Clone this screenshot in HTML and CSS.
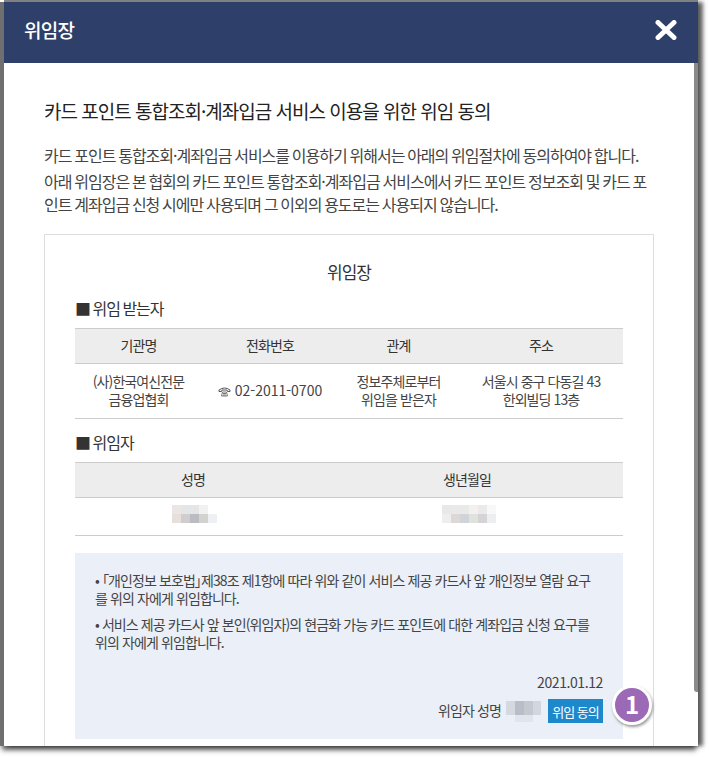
FILE: index.html
```html
<!DOCTYPE html>
<html lang="ko">
<head>
    <meta charset="UTF-8">
    <meta name="viewport" content="width=device-width, initial-scale=1.0">
    <title>위임장</title>
    <link rel="stylesheet" href="styles.css">
</head>
<body>

    <div class="window">
        <div class="window-head">
            <h1>위임장</h1>
            <svg class="close-icon" viewBox="0 0 22 20" width="22" height="20">
                <path d="M3 2.5 L19 17.5 M19 2.5 L3 17.5" stroke="#fff" stroke-width="5" stroke-linecap="round"/>
            </svg>
        </div>

        <div class="window-body">
            <h2>카드 포인트 통합조회·계좌입금 서비스 이용을 위한 위임 동의</h2>
            <p class="intro">카드 포인트 통합조회·계좌입금 서비스를 이용하기 위해서는 아래의 위임절차에 동의하여야 합니다.</p>
            <p class="intro">아래 위임장은 본 협회의 카드 포인트 통합조회·계좌입금 서비스에서 카드 포인트 정보조회 및 카드 포<br>인트 계좌입금 신청 시에만 사용되며 그 이외의 용도로는 사용되지 않습니다.</p>

            <div class="paper">
                <h3>위임장</h3>

                <h4>■ 위임 받는자</h4>
                <table class="info-table receiver">
                    <tr>
                        <th>기관명</th>
                        <th>전화번호</th>
                        <th>관계</th>
                        <th>주소</th>
                    </tr>
                    <tr>
                        <td>(사)한국여신전문<br>금융업협회</td>
                        <td class="tel"><svg class="phone-icon" viewBox="0 0 13 11" width="13" height="11">
                            <path d="M1 4 Q6.5 0 12 4 L12 5.5 L9.5 5.5 L9 4 L4 4 L3.5 5.5 L1 5.5 Z" fill="none" stroke="#555"/>
                            <path d="M3.5 10 L4.5 6 L8.5 6 L9.5 10 Z M5 7.5 H8 M5 9 H8" fill="none" stroke="#555" stroke-width="0.8"/>
                        </svg> 02-2011-0700</td>
                        <td>정보주체로부터<br>위임을 받은자</td>
                        <td>서울시 중구 다동길 43<br>한외빌딩 13층</td>
                    </tr>
                </table>

                <h4 class="second">■ 위임자</h4>
                <table class="info-table giver">
                    <tr>
                        <th>성명</th>
                        <th>생년월일</th>
                    </tr>
                    <tr>
                        <td><span class="mosaic mosaic-name"></span></td>
                        <td><span class="mosaic mosaic-birth"></span></td>
                    </tr>
                </table>

                <div class="notice">
                    <p>• <span class="bracket">「</span>개인정보 보호법<span class="bracket">」</span>제38조 제1항에 따라 위와 같이 서비스 제공 카드사 앞 개인정보 열람 요구<br>를 위의 자에게 위임합니다.</p>
                    <p>• 서비스 제공 카드사 앞 본인(위임자)의 현금화 가능 카드 포인트에 대한 계좌입금 신청 요구를<br>위의 자에게 위임합니다.</p>
                    <div class="date">2021.01.12</div>
                    <div class="sign">
                        <span class="sign-name">위임자 성명</span>
                        <span class="mosaic mosaic-sign"></span>
                        <button class="agree-btn">위임 동의</button>
                        <span class="step-badge">1</span>
                    </div>
                </div>
            </div>
        </div>

        <div class="scroll-thumb"></div>
    </div>

</body>
</html>
```

FILE: styles.css
```css
* {
    box-sizing: border-box;
}
html, body {
    height: 100%;
}
body {
    margin: 0;
    padding: 2px 11px 11px 4px;
    background: #fff;
    font-family: "Noto Sans CJK KR", "Noto Sans", sans-serif;
    color: #444;
    overflow: hidden;
}
.window {
    position: relative;
    height: 744px;
    background: #fff;
    display: flex;
    flex-direction: column;
    overflow: hidden;
    box-shadow: 0 -2px 0 #808080, -4px 0 0 #6f6f6f, 5px 0 4px rgba(0, 0, 0, 0.6), -2px 4px 5px rgba(0, 0, 0, 0.65);
}
.window-head {
    flex: none;
    height: 61px;
    background: #2e4069;
    display: flex;
    align-items: center;
    justify-content: space-between;
    padding: 0 21px 6px 20px;
}
.window-head h1 {
    margin: 0;
    font-size: 19px;
    font-weight: 500;
    letter-spacing: -0.7px;
    color: #fff;
}
.window-body {
    flex: 1;
    overflow: hidden;
    padding: 35px 44px 0 40px;
}
h2 {
    margin: 0 0 20px;
    font-size: 19px;
    line-height: 26px;
    font-weight: 400;
    letter-spacing: -1px;
    color: #222;
}
.intro {
    margin: 0 0 3px;
    font-size: 16px;
    line-height: 23px;
    letter-spacing: -1px;
    word-spacing: -0.7px;
    white-space: nowrap;
}
.paper {
    margin-top: 18px;
    border: 1px solid #ddd;
    padding: 24px 30px 30px;
}
h3 {
    margin: 0 0 12px;
    text-align: center;
    font-size: 17px;
    line-height: 26px;
    font-weight: 400;
    letter-spacing: -1px;
    color: #333;
}
h4 {
    margin: 0 0 9px;
    font-size: 16px;
    line-height: 22px;
    font-weight: 400;
    letter-spacing: -1px;
    word-spacing: -1px;
    color: #333;
}
h4.second {
    margin-top: 12px;
}
.info-table {
    width: 100%;
    border-collapse: collapse;
    table-layout: fixed;
    font-size: 14px;
    line-height: 18px;
    letter-spacing: -0.9px;
}
.info-table th {
    height: 35px;
    padding: 0 0 2px;
    background: #ededed;
    border-top: 1px solid #ccc;
    border-bottom: 1px solid #ccc;
    font-weight: 400;
    color: #333;
}
.info-table td {
    height: 55px;
    padding: 0 0 3px;
    text-align: center;
    border-bottom: 1px solid #ccc;
}
.receiver th:nth-child(1) { width: 127px; }
.receiver th:nth-child(2) { width: 136px; }
.receiver th:nth-child(3) { width: 121px; }
.giver th:nth-child(1) { width: 236px; }
.giver td {
    height: 38px;
    padding-bottom: 8px;
}
.info-table .tel {
    letter-spacing: 0;
}
.phone-icon {
    vertical-align: -1px;
}
.mosaic {
    display: inline-block;
    vertical-align: middle;
    height: 18px;
}
.mosaic-name {
    width: 45px;
    margin-left: 2px;
    background:
        linear-gradient(90deg, #ebe6e4 0 9px, #e3e5e7 9px 27px, #f1f1f1 27px 36px, #fff 36px) top / 100% 9px no-repeat,
        linear-gradient(90deg, #e6dfdb 0 9px, #cfcdcd 9px 18px, #b9bdc2 18px 27px, #d4d2cf 27px 36px, #eef0f3 36px 45px) bottom / 100% 9px no-repeat;
}
.mosaic-birth {
    width: 54px;
    margin-left: 4px;
    background:
        linear-gradient(90deg, #eae7e7 0 9px, #e8eaea 9px 27px, #f3f0ee 27px 36px, #ebe9ea 36px 45px, #f8f8f8 45px 54px) top / 100% 9px no-repeat,
        linear-gradient(90deg, #eeeeee 0 9px, #ddd8d5 9px 18px, #cfd4d8 18px 27px, #e0e2e0 27px 36px, #d6d3d5 36px 45px, #eceef0 45px 54px) bottom / 100% 9px no-repeat;
}
.notice {
    margin-top: 17px;
    height: 186px;
    background: #eaeff8;
    padding: 18px 20px 0 20px;
    font-size: 14px;
    line-height: 18px;
    letter-spacing: -0.9px;
}
.notice p {
    margin: 0 0 8px;
    white-space: nowrap;
}
.bracket {
    font-feature-settings: "palt";
}
.date {
    margin-top: 22px;
    text-align: right;
    font-size: 14px;
    letter-spacing: -0.4px;
}
.sign {
    position: relative;
    margin-top: 8px;
    display: flex;
    justify-content: flex-end;
    align-items: center;
    gap: 5px;
}
.sign-name {
    padding-bottom: 3px;
}
.mosaic-sign {
    width: 35px;
    height: 21px;
    margin-right: 2px;
    background:
        linear-gradient(90deg, #d4d8df 0 9px, #b8bdc8 9px 18px, #c4c8d1 18px 27px, #d2d6de 27px 35px) top / 100% 14px no-repeat,
        linear-gradient(90deg, #eaeff8 0 9px, #e0e4ec 9px 27px, #eaeff8 27px) bottom / 100% 7px no-repeat;
}
.agree-btn {
    width: 55px;
    height: 24px;
    padding: 0;
    border: none;
    background: #1e88cc;
    color: #fff;
    font-family: inherit;
    font-size: 13px;
    letter-spacing: -1px;
}
.step-badge {
    position: absolute;
    left: 517px;
    top: -14px;
    width: 40px;
    height: 40px;
    border-radius: 50%;
    border: 3px solid #fff;
    background: #9b69b6;
    color: #fff;
    font-size: 24px;
    font-weight: 700;
    line-height: 32px;
    text-align: center;
    letter-spacing: 0;
    box-shadow: 1px 2px 3px rgba(0, 0, 0, 0.4);
}
.scroll-thumb {
    position: absolute;
    top: 61px;
    right: 0;
    width: 4px;
    height: 629px;
    background: #8a8a8a;
    border-radius: 0 0 0 3px;
}
```
